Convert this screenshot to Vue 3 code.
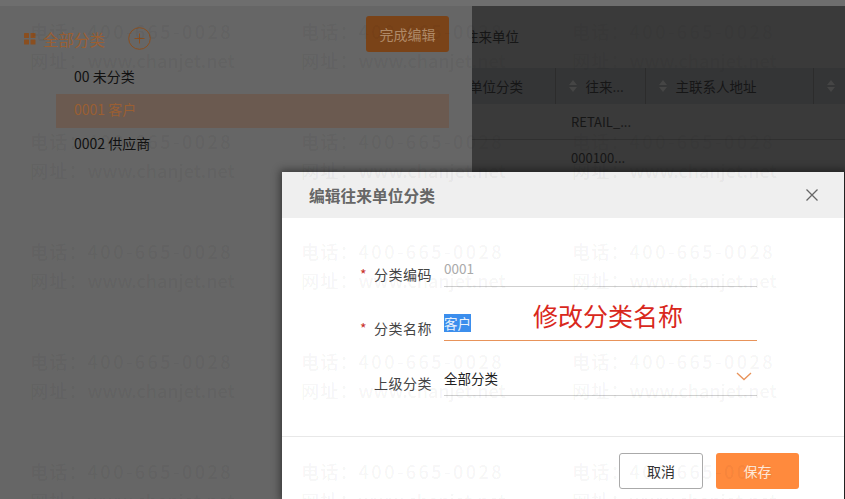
<script setup>
const wmCells = Array.from({ length: 15 }, (_, i) => i)
const categories = [
  { code: '00', name: '未分类' },
  { code: '0001', name: '客户', active: true },
  { code: '0002', name: '供应商' }
]
const columns = [
  { label: '单位分类', cls: 'c1', sort: false },
  { label: '往来...', cls: 'c2', sort: true },
  { label: '主联系人地址', cls: 'c3', sort: true },
  { label: '', cls: 'c4', sort: true }
]
</script>

<template>
  <div class="page">
    <div class="strip"></div>
    <div class="main">
      <section class="left">
        <div class="tree-head">
          <svg class="grid-ico" width="12" height="12" viewBox="0 0 12 12">
            <rect x="0" y="0" width="5" height="5" rx="0.5" />
            <rect x="6.5" y="0" width="5" height="5" rx="0.5" />
            <rect x="0" y="6.5" width="5" height="5" rx="0.5" />
            <rect x="6.5" y="6.5" width="5" height="5" rx="0.5" />
          </svg>
          <span class="all">全部分类</span>
          <svg class="plus" width="23" height="23" viewBox="0 0 23 23">
            <circle cx="11.5" cy="11.5" r="10.8" />
            <path d="M11.5 6.5v10M6.5 11.5h10" />
          </svg>
          <button class="finish">完成编辑</button>
        </div>
        <ul class="tree">
          <li v-for="c in categories" :key="c.code" :class="{ active: c.active }">{{ c.code }} {{ c.name }}</li>
        </ul>
      </section>
      <section class="right">
        <div class="title">往来单位</div>
        <div class="thead">
          <div v-for="col in columns" :key="col.cls" class="th" :class="col.cls">
            <span v-if="col.sort" class="sort"><i class="up"></i><i class="down"></i></span>
            <span>{{ col.label }}</span>
          </div>
        </div>
        <div class="row">RETAIL_...</div>
        <div class="row">000100...</div>
      </section>
    </div>

    <div class="dialog">
      <header class="d-head">
        <h2>编辑往来单位分类</h2>
        <svg class="close" width="14" height="14" viewBox="0 0 14 14">
          <path d="M1.5 1.5l11 11M12.5 1.5l-11 11" />
        </svg>
      </header>
      <div class="form">
        <div class="f-row">
          <label><em>*</em>分类编码</label>
          <div class="field muted">0001</div>
        </div>
        <div class="f-row">
          <label><em>*</em>分类名称</label>
          <div class="field focus"><span class="sel">客户</span><span class="note">修改分类名称</span></div>
        </div>
        <div class="f-row">
          <label>上级分类</label>
          <div class="field select">全部分类
            <svg class="chev" width="16" height="9" viewBox="0 0 16 9"><path d="M1 1l7 6.5L15 1" /></svg>
          </div>
        </div>
      </div>
      <footer class="d-foot">
        <button class="cancel">取消</button>
        <button class="save">保存</button>
      </footer>
    </div>

    <div class="wm">
      <div v-for="n in wmCells" :key="n" class="wm-cell">
        <div>电话：<span class="tel">400-665-0028</span></div>
        <div>网址：<span class="url">www.chanjet.net</span></div>
      </div>
    </div>
  </div>
</template>

<style>
html, body { margin: 0; padding: 0; background: #666; }
</style>

<style scoped>
.page {
  position: relative;
  width: 845px;
  height: 499px;
  overflow: hidden;
  display: flex;
  flex-direction: column;
  background: #666;
  font-family: "Noto Sans CJK SC", "Liberation Sans", sans-serif;
  font-size: 13.5px;
  color: #111;
}
.strip { height: 6px; flex: none; background: #6e6e6e; }
.main { flex: 1; display: flex; min-height: 0; }
.left { width: 472px; flex: none; background: #666; }
.tree-head {
  display: flex;
  align-items: center;
  height: 46px;
  padding: 9px 23px 0 24px;
}
.grid-ico { flex: none; margin-top: 1px; }
.grid-ico rect { fill: #8a4f20; }
.all { margin-left: 7px; margin-top: 1px; font-size: 15.5px; color: #9a5f33; }
.plus { margin-left: 23px; margin-top: 1px; flex: none; }
.plus circle, .plus path { fill: none; stroke: #8a4f20; stroke-width: 1; }
.finish {
  margin-left: auto;
  margin-top: -9px;
  width: 83px;
  height: 36px;
  border: 0;
  border-radius: 3px;
  background: #7a4318;
  color: #b08a68;
  font: inherit;
  font-size: 14px;
  padding: 0;
}
.tree { list-style: none; margin: 0 23px 0 56px; padding: 0; }
.tree li {
  height: 34px;
  line-height: 31px;
  padding-left: 18px;
  font-size: 14px;
  white-space: nowrap;
}
.tree li:first-child { height: 33px; }
.tree li.active { background: #6b5a50; color: #9a5f33; }

.right { flex: 1; min-width: 0; background: #3a3a3a; color: #161616; overflow: hidden; }
.title { height: 62px; line-height: 60px; margin-left: -7px; white-space: nowrap; }
.thead { display: flex; height: 36px; background: #343536; }
.th {
  display: flex;
  align-items: center;
  gap: 8.5px;
  flex: none;
  white-space: nowrap;
  border-right: 1px solid #2c2c2c;
  box-sizing: border-box;
}
.c1 { width: 84px; }
.c1 span { margin-left: -3px; }
.c2 { width: 90px; padding-left: 13px; }
.c3 { width: 168px; padding-left: 13px; }
.c4 { width: 40px; padding-left: 13px; border-right: 0; }
.sort { display: inline-flex; flex-direction: column; gap: 2px; width: 8px; flex: none; }
.sort i { display: block; width: 0; height: 0; border-left: 4px solid transparent; border-right: 4px solid transparent; }
.sort .up { border-bottom: 5px solid #454545; }
.sort .down { border-top: 5px solid #454545; }
.row {
  height: 35px;
  line-height: 35px;
  padding-left: 99px;
  font-size: 13px;
  border-bottom: 1px solid #303030;
  white-space: nowrap;
}

.dialog {
  position: absolute;
  left: 282px;
  top: 172px;
  width: 562px;
  height: 327px;
  display: flex;
  flex-direction: column;
  background: #fff;
  box-shadow: 0 0 8px 2px rgba(0, 0, 0, 0.45);
  border-right: 1px solid #222;
}
.d-head {
  flex: none;
  height: 46px;
  background: #efefef;
  display: flex;
  align-items: center;
  justify-content: space-between;
  padding: 0 25px 0 27px;
}
.d-head h2 { margin: 0; font-size: 15.75px; font-weight: 700; color: #666; }
.close { flex: none; }
.close path { fill: none; stroke: #666; stroke-width: 1.3; }
.form { flex: none; height: 218px; box-sizing: border-box; padding-top: 33px; }
.f-row {
  display: flex;
  height: 54px;
  align-items: flex-start;
}
.f-row:nth-child(2) { height: 55px; }
.f-row label {
  width: 150px;
  flex: none;
  text-align: right;
  line-height: 20px;
  padding-top: 13px;
  color: #444;
  font-size: 14px;
  letter-spacing: 0.5px;
}
.f-row em { font-style: normal; color: #c8302a; margin-right: 7px; }
.field {
  position: relative;
  margin-left: 12px;
  width: 313px;
  height: 36px;
  line-height: 20px;
  padding-top: 8px;
  box-sizing: border-box;
  border-bottom: 1px solid #cfcfcf;
  white-space: nowrap;
}
.muted { color: #aaa; padding-top: 7px; }
.focus { border-bottom: 1px solid #e8935a; }
.select { color: #222; }
.sel { display: inline-block; background: #3b8eed; color: #e8f1fb; line-height: 18px; }
.note {
  position: absolute;
  left: 89px;
  top: -8px;
  line-height: 36px;
  font-size: 25px;
  color: #d9281c;
}
.chev { position: absolute; right: 5px; top: 12px; }
.chev path { fill: none; stroke: #e8935a; stroke-width: 1.3; }
.d-foot {
  flex: none;
  height: 63px;
  box-sizing: border-box;
  border-top: 1px solid #e8e8e8;
  display: flex;
  justify-content: flex-end;
  align-items: flex-start;
  gap: 13px;
  padding: 16px 45px 0 0;
}
.d-foot button {
  height: 36px;
  border-radius: 3px;
  font: inherit;
  font-size: 14px;
  padding: 0;
}
.cancel { width: 84px; background: #fff; border: 1px solid #aaa; color: #333; }
.save { width: 83px; background: #ff8a3d; border: 0; color: #ffe9d8; }

.wm {
  position: absolute;
  left: 30px;
  top: 17px;
  display: grid;
  grid-template-columns: repeat(3, 271px);
  grid-auto-rows: 110px;
  pointer-events: none;
}
.wm-cell {
  font-size: 18px;
  font-weight: 500;
  line-height: 29px;
  letter-spacing: 1.2px;
  color: rgba(0, 0, 0, 0.05);
  white-space: nowrap;
}
.tel { letter-spacing: 2.5px; }
.url { letter-spacing: 0; }
</style>
